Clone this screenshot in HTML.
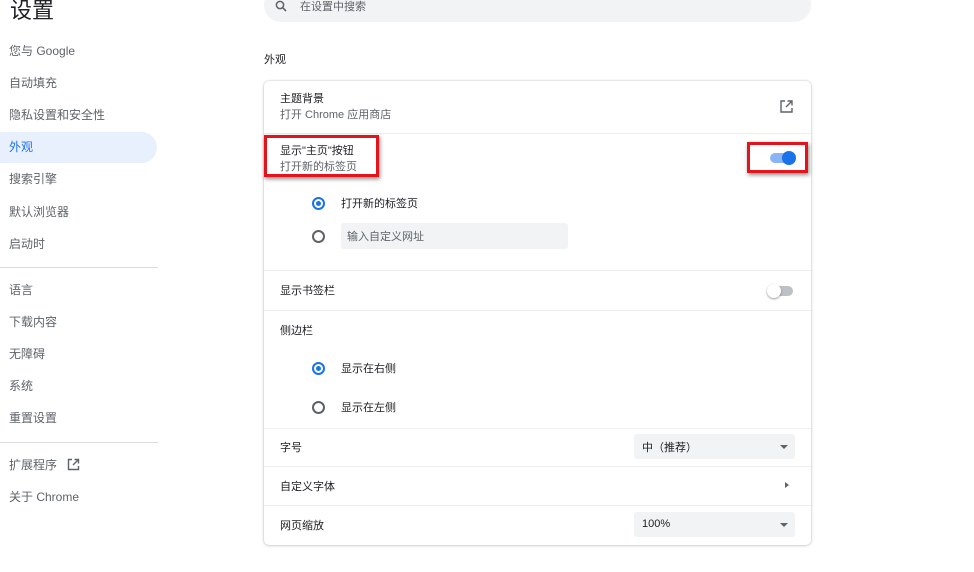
<!DOCTYPE html>
<html><head><meta charset="utf-8"><style>
*{margin:0;padding:0;box-sizing:border-box}
body{width:974px;height:572px;background:#fff;font-family:"Liberation Sans","Noto Sans CJK SC",sans-serif;position:relative;overflow:hidden;color:#202124}
.a{position:absolute}
.nav{font-size:12px;color:#5f6368;left:9px}
.t{font-size:12px;color:#202124}
.s{font-size:11px;color:#5f6368}
.hr{position:absolute;left:264px;width:547px;height:1px;background:#eceef0}
.radio{position:absolute;width:13px;height:13px;border-radius:50%;border:2px solid #5f6368}
.radio.on{border-color:#1a73e8}
.radio.on:after{content:"";position:absolute;left:2px;top:2px;width:5px;height:5px;border-radius:50%;background:#1a73e8}
.sel{position:absolute;left:634px;width:161px;height:25px;background:#f1f3f4;border-radius:3px;font-size:11px;color:#202124;padding:5px 8px}
.sel:after{content:"";position:absolute;right:7px;top:11px;border:4px solid transparent;border-top:4px solid #5f6368;border-bottom:0}
.red{position:absolute;border:3px solid #e3141b;box-shadow:1px 2px 4px rgba(0,0,0,.45)}
</style></head><body>
<div class="a" style="left:10px;top:-7px;font-size:22px;color:#202124">设置</div>
<div class="a" style="left:264px;top:-12px;width:547px;height:34px;background:#f1f3f4;border-radius:17px"></div>
<svg class="a" style="left:275px;top:0" width="12" height="12" viewBox="0 0 12 12"><circle cx="5" cy="5" r="3.6" fill="none" stroke="#5f6368" stroke-width="1.5"/><path d="M7.6 7.6L11 11" stroke="#5f6368" stroke-width="1.6"/></svg>
<div class="a" style="left:300px;top:-2px;font-size:11px;color:#5f6368">在设置中搜索</div>

<div class="a" style="left:0;top:132px;width:157px;height:31px;background:#e8f0fe;border-radius:0 16px 16px 0"></div>
<div class="a nav" style="top:42px">您与 Google</div>
<div class="a nav" style="top:74px">自动填充</div>
<div class="a nav" style="top:106px">隐私设置和安全性</div>
<div class="a nav" style="top:138px;color:#1a73e8">外观</div>
<div class="a nav" style="top:170px">搜索引擎</div>
<div class="a nav" style="top:203px">默认浏览器</div>
<div class="a nav" style="top:235px">启动时</div>
<div class="a" style="left:0;top:267px;width:158px;height:1px;background:#dadce0"></div>
<div class="a nav" style="top:281px">语言</div>
<div class="a nav" style="top:313px">下载内容</div>
<div class="a nav" style="top:345px">无障碍</div>
<div class="a nav" style="top:377px">系统</div>
<div class="a nav" style="top:409px">重置设置</div>
<div class="a" style="left:0;top:442px;width:158px;height:1px;background:#dadce0"></div>
<div class="a nav" style="top:456px">扩展程序</div>
<svg class="a" style="left:67px;top:458px" width="13" height="13" viewBox="0 0 13 13"><path d="M5 1.5H1.5v10h10V8M7.5 1.5h4v4M11.5 1.5L6 7" fill="none" stroke="#5f6368" stroke-width="1.4"/></svg>
<div class="a nav" style="top:488px">关于 Chrome</div>

<div class="a t" style="left:264px;top:51px;font-size:11px">外观</div>
<div class="a" style="left:264px;top:81px;width:547px;height:464px;border-radius:5px;box-shadow:0 0 2px rgba(60,64,67,.3),0 1px 3px rgba(60,64,67,.15)"></div>
<div class="a t" style="left:280px;top:90px;font-size:11px">主题背景</div>
<div class="a s" style="left:280px;top:106px">打开 Chrome 应用商店</div>
<svg class="a" style="left:780px;top:100px" width="13" height="13" viewBox="0 0 13 13"><path d="M5 1H1v11h11V8M7.5 1h4.5v4.5M12 1L6 7" fill="none" stroke="#5f6368" stroke-width="1.4"/></svg>
<div class="hr" style="top:133px"></div>
<div class="a t" style="left:280px;top:142px;font-size:11px">显示"主页"按钮</div>
<div class="a s" style="left:280px;top:158px">打开新的标签页</div>
<div class="a" style="left:770px;top:153px;width:24px;height:10px;border-radius:5px;background:#8ab4f8"></div>
<div class="a" style="left:782px;top:151px;width:14px;height:14px;border-radius:50%;background:#1a73e8"></div>
<div class="radio on" style="left:312px;top:197px"></div>
<div class="a t" style="left:341px;top:195px;font-size:11px">打开新的标签页</div>
<div class="radio" style="left:312px;top:230px"></div>
<div class="a" style="left:341px;top:223px;width:227px;height:26px;background:#f1f3f4;border-radius:3px;font-size:11px;color:#5f6368;padding:5px 6px">输入自定义网址</div>
<div class="hr" style="top:270px"></div>
<div class="a t" style="left:280px;top:282px;font-size:11px">显示书签栏</div>
<div class="a" style="left:770px;top:286px;width:23px;height:10px;border-radius:5px;background:#bdc1c6"></div>
<div class="a" style="left:767px;top:284px;width:14px;height:14px;border-radius:50%;background:#fff;box-shadow:0 1px 2px rgba(0,0,0,.4)"></div>
<div class="hr" style="top:310px"></div>
<div class="a t" style="left:280px;top:322px;font-size:11px">侧边栏</div>
<div class="radio on" style="left:312px;top:362px"></div>
<div class="a t" style="left:341px;top:360px;font-size:11px">显示在右侧</div>
<div class="radio" style="left:312px;top:401px"></div>
<div class="a t" style="left:341px;top:399px;font-size:11px">显示在左侧</div>
<div class="hr" style="top:428px"></div>
<div class="a t" style="left:280px;top:439px;font-size:11px">字号</div>
<div class="sel" style="top:434px">中（推荐）</div>
<div class="hr" style="top:466px"></div>
<div class="a t" style="left:280px;top:478px;font-size:11px">自定义字体</div>
<div class="a" style="left:785px;top:482px;border:3.5px solid transparent;border-left:4px solid #5f6368;border-right:0"></div>
<div class="hr" style="top:505px"></div>
<div class="a t" style="left:280px;top:517px;font-size:11px">网页缩放</div>
<div class="sel" style="top:512px;padding-top:6px">100%</div>

<div class="red" style="left:264px;top:135px;width:115px;height:42px"></div>
<div class="red" style="left:747px;top:142px;width:61px;height:31px"></div>
</body></html>
